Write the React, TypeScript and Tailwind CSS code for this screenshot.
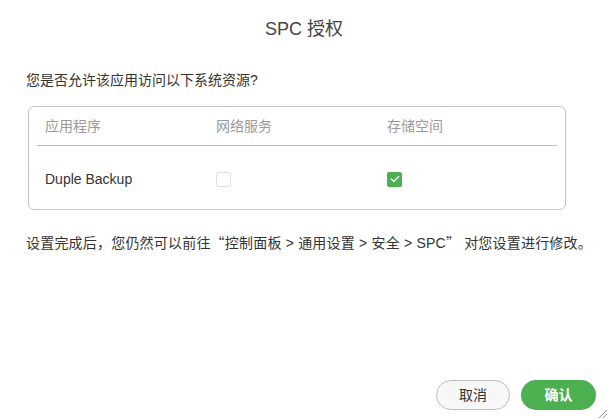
import { FaCheck } from "react-icons/fa6";

const font = { fontFamily: '"Liberation Sans", Arial, "Noto Sans CJK SC", sans-serif' };
const cjk = { fontFamily: '"Noto Sans CJK SC", sans-serif' };

export default function App() {
  return (
    <div lang="zh-CN" style={font} className="relative w-[608px] h-[419px] bg-white text-[#333] overflow-hidden">
      <div className="h-[58px] flex items-center justify-center text-[18px] text-[#444]">SPC 授权</div>

      <div className="px-[28px]">
        <div className="pt-[12px] -ml-[2px] text-[14px] leading-[20px] text-[#333]">您是否允许该应用访问以下系统资源?</div>

        <div className="mt-[16px] w-[538px] h-[104px] border border-[#c4c4c4] rounded-[6px] px-[8px]">
          <div className="flex items-center h-[39px] border-b border-[#bdbdbd] text-[14px] text-[#9a9a9a]">
            <div className="w-[179px] pl-[8px]">应用程序</div>
            <div className="w-[171px]">网络服务</div>
            <div>存储空间</div>
          </div>
          <div className="flex items-center h-[68px] pb-[2px] text-[14px] text-[#333]">
            <div className="w-[179px] pl-[8px]">Duple Backup</div>
            <div className="w-[171px]">
              <div className="w-[15px] h-[15px] border border-[#e0e0e0] rounded-[2px]" />
            </div>
            <div>
              <div className="w-[15px] h-[15px] rounded-[2px] bg-[#4caf50] flex items-center justify-center text-white">
                <FaCheck className="w-[10px] h-[10px]" />
              </div>
            </div>
          </div>
        </div>

        <div className="mt-[22px] -ml-[2px] text-[14px] leading-[20px] text-[#333] whitespace-nowrap tracking-[0.2px]">
          设置完成后，您仍然可以前往<span style={cjk}>“</span>控制面板 &gt; 通用设置 &gt; 安全 &gt; SPC<span style={cjk}>”</span> 对您设置进行修改。
        </div>
      </div>

      <div className="absolute right-[12px] bottom-[9px] flex gap-[11px]">
        <button className="w-[74px] h-[30px] rounded-full border border-[#bdbdbd] bg-[#f7f7f7] text-[14px] text-[#333]">取消</button>
        <button className="w-[75px] h-[30px] rounded-full bg-[#4caf50] text-[14px] text-white font-bold">确认</button>
      </div>

      <svg className="absolute right-[0px] bottom-[0px]" width="12" height="12" viewBox="0 0 12 12">
        <line x1="11" y1="3" x2="3" y2="11" stroke="#999" strokeWidth="1" />
        <line x1="11" y1="7" x2="7" y2="11" stroke="#999" strokeWidth="1" />
      </svg>
    </div>
  );
}
